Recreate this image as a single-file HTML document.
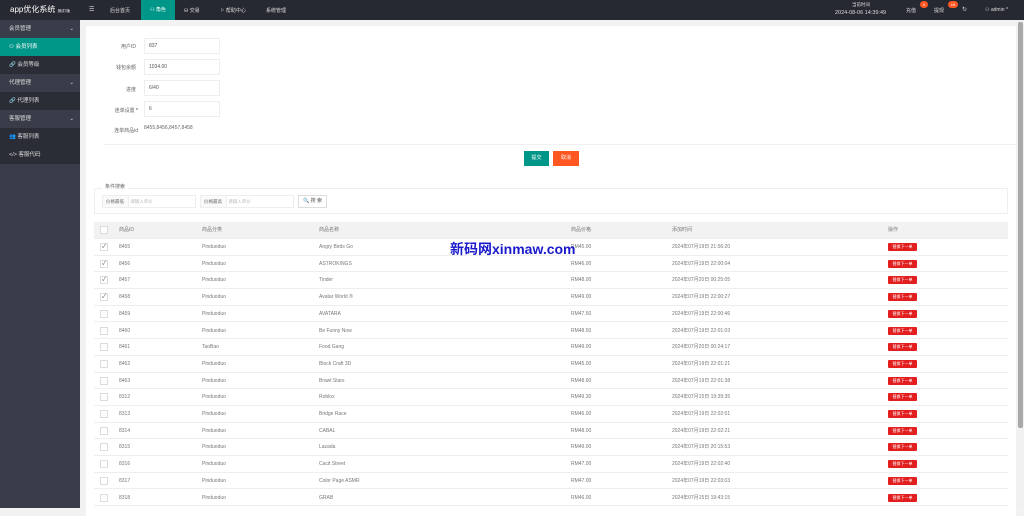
<!DOCTYPE html>
<html><head><meta charset="utf-8"><style>
*{margin:0;padding:0;box-sizing:border-box}
body{width:1024px;height:508px;overflow:hidden;background:#f2f2f2;font-family:"Liberation Sans","Noto Sans CJK SC",sans-serif;font-size:5px;color:#666;position:relative}
.abs{position:absolute}
.top{left:0;top:0;width:1024px;height:20px;background:#262932;color:#ddd}
.side{left:0;top:20px;width:80px;height:488px;background:#393d49;color:#ddd}
.si{position:absolute;left:0;width:80px;height:18px;line-height:18px;font-size:5.5px;padding-left:9px}
.sub{background:#2a2d36}
.act{background:#009688;color:#fff}
.card{left:86px;top:26px;width:930px;height:490px;background:#fff}
.lbl{position:absolute;font-size:5px;color:#666;text-align:right;width:60px}
.inp{position:absolute;left:144px;width:76px;height:16px;border:1px solid #eee;font-size:5px;line-height:14px;padding-left:4px;color:#555}
.row{position:absolute;left:94px;width:914px;height:16.7px;border-bottom:1px solid #eee;font-size:5px;line-height:17px;color:#777}
.row span{position:absolute}
.cb{position:absolute;left:6px;top:4px;width:8px;height:8px;border:1px solid #ddd;font-size:6px;line-height:6px;text-align:center;color:#666}
.op{position:absolute;left:794px!important;top:4px;height:8px;width:29px;background:#e31e1e;color:#fff;font-size:4px;line-height:8px;text-align:center;border-radius:1px}
.badge{position:absolute;width:8px;height:7px;border-radius:4px;background:#ff5722;color:#fff;font-size:4px;text-align:center;line-height:7px}
</style></head><body>
<div class="abs top">
<div class="abs" style="left:10px;top:4px;font-size:8px;color:#fff">app优化系统 <span style="font-size:3.5px">测试7版</span></div>
<div class="abs" style="left:89px;top:6px;font-size:6px">☰</div>
<div class="abs" style="left:110px;top:7px;font-size:5px">后台首页</div>
<div class="abs" style="left:141px;top:0;width:34px;height:20px;background:#009688;color:#fff;font-size:5px;line-height:20px;text-align:center">⚇ 角色</div>
<div class="abs" style="left:184px;top:7px;font-size:5px">⛁ 交易</div>
<div class="abs" style="left:220px;top:7px;font-size:5px">⚐ 帮助中心</div>
<div class="abs" style="left:266px;top:7px;font-size:5px">系统管理</div>
<div class="abs" style="left:852px;top:2px;font-size:4.5px">当前时间</div>
<div class="abs" style="left:835px;top:10px;font-size:5.5px">2024-08-06 14:39:49</div>
<div class="abs" style="left:906px;top:7px;font-size:5px">充值</div><div class="badge" style="left:920px;top:1px">0</div>
<div class="abs" style="left:934px;top:7px;font-size:5px">提现</div><div class="badge" style="left:948px;top:1px;width:10px">16</div>
<div class="abs" style="left:962px;top:6px;font-size:6px">↻</div>
<div class="abs" style="left:985px;top:7px;font-size:5px">⚇ admin ^</div>
</div>
<div class="abs side">
<div class="si" style="top:0">会员管理<span style="position:absolute;right:6px">⌄</span></div>
<div class="si act" style="top:18px">⚇ 会员列表</div>
<div class="si sub" style="top:36px">🔗 会员等级</div>
<div class="si" style="top:54px">代理管理<span style="position:absolute;right:6px">⌄</span></div>
<div class="si sub" style="top:72px">🔗 代理列表</div>
<div class="si" style="top:90px">客服管理<span style="position:absolute;right:6px">⌄</span></div>
<div class="si sub" style="top:108px">👥 客服列表</div>
<div class="si sub" style="top:126px">&lt;/&gt; 客服代码</div>
</div>
<div class="abs card"></div>
<div class="abs" style="left:1016px;top:20px;width:8px;height:488px;background:#f1f1f1"></div>
<div class="abs" style="left:1018px;top:22px;width:5px;height:406px;background:#a8a8a8;border-radius:2px"></div>
<div class="lbl" style="left:76px;top:43px">用户ID</div><div class="inp" style="top:38px">837</div>
<div class="lbl" style="left:76px;top:64px">钱包余额</div><div class="inp" style="top:59px">1034.00</div>
<div class="lbl" style="left:76px;top:86px">进度</div><div class="inp" style="top:80px">6/40</div>
<div class="lbl" style="left:78px;top:107px">连单设置 <span style="color:#333">*</span></div><div class="inp" style="top:101px">6</div>
<div class="lbl" style="left:78px;top:127px">连单商品id</div><div class="abs" style="left:144px;top:125px;font-size:5px">8455,8456,8457,8458</div>
<div class="abs" style="left:104px;top:144px;width:912px;height:1px;background:#f0f0f0"></div>
<div class="abs" style="left:524px;top:151px;width:25px;height:15px;background:#009688;color:#fff;font-size:5px;line-height:15px;text-align:center">提交</div>
<div class="abs" style="left:553px;top:151px;width:26px;height:15px;background:#ff5722;color:#fff;font-size:5px;line-height:15px;text-align:center">取消</div>
<div class="abs" style="left:94px;top:188px;width:914px;height:26px;border:1px solid #eee"></div>
<div class="abs" style="left:102px;top:183px;background:#fff;padding:0 3px;font-size:5px">条件搜索</div>
<div class="abs" style="left:102px;top:195px;width:94px;height:13px;border:1px solid #eee;font-size:4.5px;line-height:11px"><span style="display:inline-block;width:26px;background:#fafafa;border-right:1px solid #eee;padding-left:3px">价格最低</span> <span style="color:#bbb">请输入单价</span></div>
<div class="abs" style="left:200px;top:195px;width:94px;height:13px;border:1px solid #eee;font-size:4.5px;line-height:11px"><span style="display:inline-block;width:26px;background:#fafafa;border-right:1px solid #eee;padding-left:3px">价格最高</span> <span style="color:#bbb">请输入单价</span></div>
<div class="abs" style="left:298px;top:195px;width:29px;height:13px;border:1px solid #ddd;font-size:5px;line-height:11px;text-align:center;color:#555">🔍 搜 索</div>
<div class="row" style="top:222px;background:#f2f2f2"><div class="cb" style="background:#fff"></div><span style="left:25px">商品ID</span><span style="left:108px">商品分类</span><span style="left:225px">商品名称</span><span style="left:477px">商品价格</span><span style="left:578px">添加时间</span><span style="left:794px">操作</span></div>
<div class="abs" style="left:450px;top:239px;font-size:14px;font-weight:bold;color:#1a1acc;z-index:5">新码网xinmaw.com</div>
<div id="rows"></div>
<script>
var d=[["8455","Pinduoduo","Angry Birds Go","RM45.00","2024年07月19日 21:56:20",1],["8456","Pinduoduo","ASTROKINGS","RM46.00","2024年07月19日 22:00:04",1],["8457","Pinduoduo","Tinder","RM48.00","2024年07月20日 00:25:05",1],["8458","Pinduoduo","Avatar World ®","RM49.00","2024年07月19日 22:00:27",1],["8459","Pinduoduo","AVATARA","RM47.50","2024年07月19日 22:00:46"],["8460","Pinduoduo","Be Funny Now","RM48.50","2024年07月19日 22:01:03"],["8461","TaoBao","Food Gang","RM49.00","2024年07月20日 00:24:17"],["8462","Pinduoduo","Block Craft 3D","RM45.00","2024年07月19日 22:01:21"],["8463","Pinduoduo","Brawl Stars","RM48.60","2024年07月19日 22:01:38"],["8312","Pinduoduo","Roblox","RM49.30","2024年07月15日 19:39:35"],["8313","Pinduoduo","Bridge Race","RM46.00","2024年07月19日 22:02:01"],["8314","Pinduoduo","CABAL","RM48.00","2024年07月19日 22:02:21"],["8315","Pinduoduo","Lazada","RM49.00","2024年07月19日 20:15:53"],["8316","Pinduoduo","Cacit Street","RM47.00","2024年07月19日 22:02:40"],["8317","Pinduoduo","Color Page ASMR","RM47.00","2024年07月19日 22:03:03"],["8318","Pinduoduo","GRAB","RM46.00","2024年07月15日 19:43:15"]];
var h="";d.forEach(function(r,i){h+='<div class="row" style="top:'+(239+i*16.7)+'px"><div class="cb">'+(r[5]?'✓':'')+'</div><span style="left:25px">'+r[0]+'</span><span style="left:108px">'+r[1]+'</span><span style="left:225px">'+r[2]+'</span><span style="left:477px">'+r[3]+'</span><span style="left:578px">'+r[4]+'</span><span class="op">替换下一单</span></div>'});
document.getElementById("rows").innerHTML=h;
</script>
</body></html>
